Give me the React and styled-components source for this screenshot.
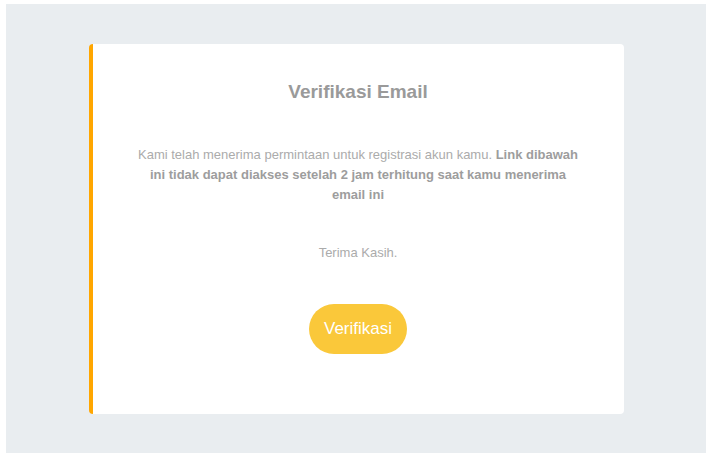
import React from 'react';
import styled, { createGlobalStyle } from 'styled-components';

const GlobalStyle = createGlobalStyle`
  body {
    margin: 0;
    background: #ffffff;
    font-family: "Liberation Sans", Arial, sans-serif;
  }
`;

const App = () => {
  return (
    <Page>
      <GlobalStyle />
      <Backdrop>
        <Card>
          <Title>Verifikasi Email</Title>
          <Message>
            Kami telah menerima permintaan untuk registrasi akun kamu.{' '}
            <strong>
              Link dibawah<br />
              ini tidak dapat diakses setelah 2 jam terhitung saat kamu menerima<br />
              email ini
            </strong>
          </Message>
          <Thanks>Terima Kasih.</Thanks>
          <VerifyButton>Verifikasi</VerifyButton>
        </Card>
      </Backdrop>
    </Page>
  );
};

export default App;

// outer white frame
const Page = styled.div`
  padding: 4px 6px 6px 6px;
`;

const Backdrop = styled.div`
  background: #e9edf0;
  padding: 40px 0 39px;
  display: flex;
  justify-content: center;
`;

const Card = styled.div`
  width: 535px;
  height: 370px;
  box-sizing: border-box;
  background: #ffffff;
  border-left: 4px solid #ffa600;
  border-radius: 4px;
  padding: 36px 30px 0;
  display: flex;
  flex-direction: column;
  align-items: center;
  text-align: center;
`;

const Title = styled.h1`
  margin: 0;
  font-size: 19px;
  line-height: 24px;
  font-weight: bold;
  color: #9a9a9a;
`;

const Message = styled.p`
  margin: 41px 0 0;
  font-size: 13px;
  line-height: 20px;
  color: #ababab;

  & > strong {
    color: #9d9d9d;
  }
`;

const Thanks = styled.p`
  margin: 38px 0 0;
  font-size: 13px;
  line-height: 20px;
  color: #ababab;
`;

const VerifyButton = styled.button`
  margin-top: 41px;
  height: 50px;
  padding: 0 15px;
  border: none;
  border-radius: 25px;
  background: #fac83a;
  color: #ffffff;
  font-family: "Liberation Sans", Arial, sans-serif;
  font-size: 17px;
  cursor: pointer;
`;
